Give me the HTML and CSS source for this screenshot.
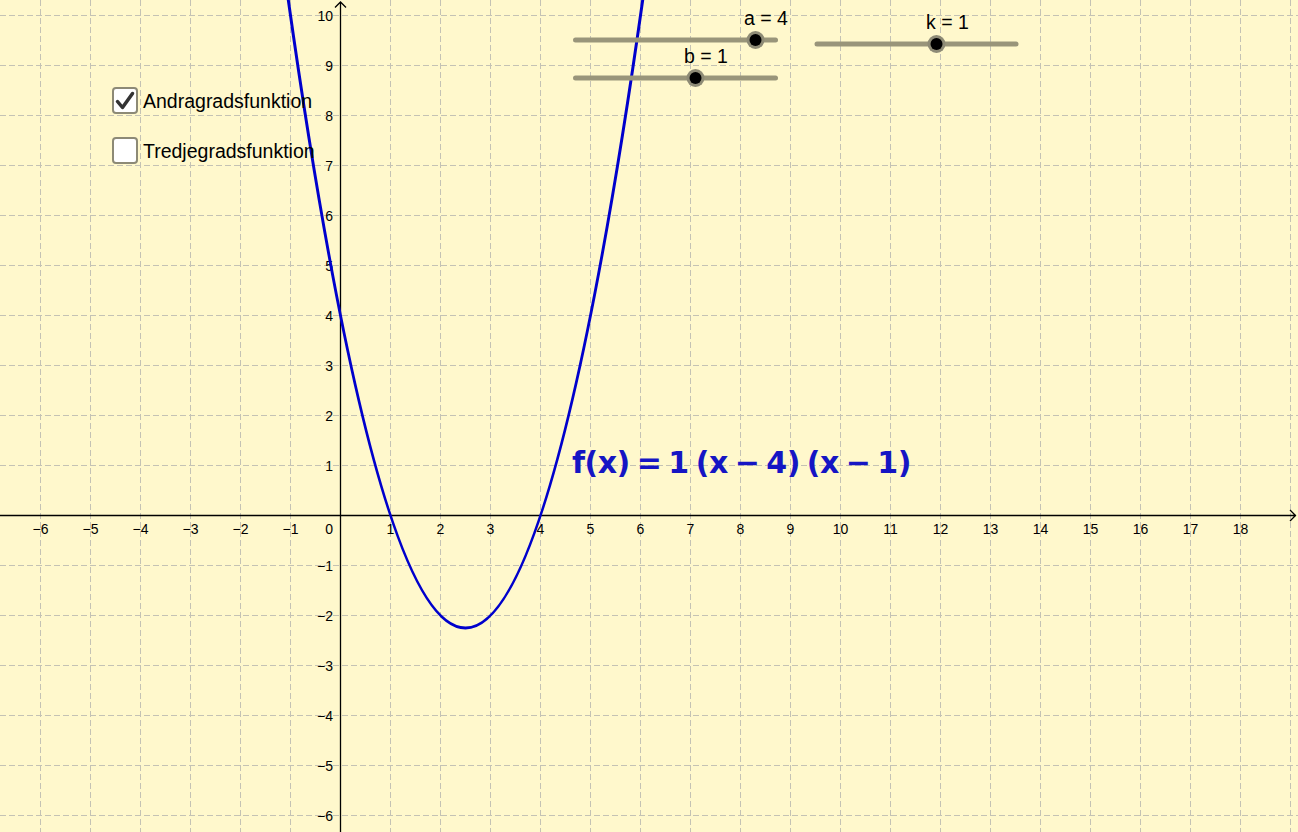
FILE: index.html
```html
<!DOCTYPE html>
<html>
<head>
<meta charset="utf-8">
<link rel="stylesheet" href="styles.css">
</head>
<body>
<div class="board">
  <svg class="plot" width="1298" height="832" viewBox="0 0 1298 832" xmlns="http://www.w3.org/2000/svg">
    <path class="grid" d="M40.5 0V832M90.5 0V832M140.5 0V832M190.5 0V832M240.5 0V832M290.5 0V832M390.5 0V832M440.5 0V832M490.5 0V832M540.5 0V832M590.5 0V832M640.5 0V832M690.5 0V832M740.5 0V832M790.5 0V832M840.5 0V832M890.5 0V832M940.5 0V832M990.5 0V832M1040.5 0V832M1090.5 0V832M1140.5 0V832M1190.5 0V832M1240.5 0V832M1290.5 0V832"/>
    <path class="grid" d="M0 15.5H1298M0 65.5H1298M0 115.5H1298M0 165.5H1298M0 215.5H1298M0 265.5H1298M0 315.5H1298M0 365.5H1298M0 415.5H1298M0 465.5H1298M0 565.5H1298M0 615.5H1298M0 665.5H1298M0 715.5H1298M0 765.5H1298M0 815.5H1298"/>
    <path class="axis" d="M0 515.5H1296M1290 510L1295.5 515.5L1290 521M340.5 832V2M335 7.5L340.5 2L346 7.5"/>
    <g class="xlab">
      <text x="40.5" y="534">−6</text><text x="90.5" y="534">−5</text><text x="140.5" y="534">−4</text>
      <text x="190.5" y="534">−3</text><text x="240.5" y="534">−2</text><text x="290.5" y="534">−1</text>
      <text x="390.5" y="534">1</text><text x="440.5" y="534">2</text><text x="490.5" y="534">3</text>
      <text x="540.5" y="534">4</text><text x="590.5" y="534">5</text><text x="640.5" y="534">6</text>
      <text x="690.5" y="534">7</text><text x="740.5" y="534">8</text><text x="790.5" y="534">9</text>
      <text x="840.5" y="534">10</text><text x="890.5" y="534">11</text><text x="940.5" y="534">12</text>
      <text x="990.5" y="534">13</text><text x="1040.5" y="534">14</text><text x="1090.5" y="534">15</text>
      <text x="1140.5" y="534">16</text><text x="1190.5" y="534">17</text><text x="1240.5" y="534">18</text>
    </g>
    <g class="ylab">
      <text x="333" y="20.5">10</text><text x="333" y="70.5">9</text><text x="333" y="120.5">8</text>
      <text x="333" y="170.5">7</text><text x="333" y="220.5">6</text><text x="333" y="270.5">5</text>
      <text x="333" y="320.5">4</text><text x="333" y="370.5">3</text><text x="333" y="420.5">2</text>
      <text x="333" y="470.5">1</text><text x="333" y="534">0</text>
      <text x="333" y="570.5">−1</text><text x="333" y="620.5">−2</text><text x="333" y="670.5">−3</text>
      <text x="333" y="720.5">−4</text><text x="333" y="770.5">−5</text><text x="333" y="820.5">−6</text>
    </g>
    <path class="curve" d="M285.5 -20Q465.5 1276 645.5 -20"/>
    <g class="slider">
      <line class="track" x1="575.5" y1="40" x2="775.5" y2="40"/>
      <circle class="halo" cx="755.5" cy="40" r="9"/>
      <circle class="knob" cx="755.5" cy="40" r="6"/>
      <text class="slabel" x="744" y="25">a = 4</text>
    </g>
    <g class="slider">
      <line class="track" x1="575.5" y1="78" x2="775.5" y2="78"/>
      <circle class="halo" cx="695.5" cy="78" r="9"/>
      <circle class="knob" cx="695.5" cy="78" r="6"/>
      <text class="slabel" x="684" y="62.5">b = 1</text>
    </g>
    <g class="slider">
      <line class="track" x1="817" y1="44" x2="1016" y2="44"/>
      <circle class="halo" cx="936.5" cy="44" r="9"/>
      <circle class="knob" cx="936.5" cy="44" r="6"/>
      <text class="slabel" x="926" y="29">k = 1</text>
    </g>
  </svg>

  <div class="checks">
    <label class="check">
      <span class="box">
        <svg width="22" height="22" viewBox="0 0 22 22"><path class="tick" d="M3.5 11.5L8.5 17.5L18.5 3.5"/></svg>
      </span>
      <span class="ctext">Andragradsfunktion</span>
    </label>
    <label class="check">
      <span class="box"></span>
      <span class="ctext">Tredjegradsfunktion</span>
    </label>
  </div>

  <div class="formula">f(x) = 1 (x − 4) (x − 1)</div>
</div>
</body>
</html>
```

FILE: styles.css
```css
html, body {
  margin: 0;
  padding: 0;
  background: #fff8cc;
  overflow: hidden;
}

.board {
  position: relative;
  width: 1298px;
  height: 832px;
  background: #fff8cc;
  font-family: "Liberation Sans", Arial, sans-serif;
}

.plot {
  position: absolute;
  left: 0;
  top: 0;
  display: block;
}

.grid {
  fill: none;
  stroke: #c4c2b4;
  stroke-width: 1;
  stroke-dasharray: 6 3;
}

.axis {
  fill: none;
  stroke: #000;
  stroke-width: 1.3;
}

.xlab text {
  font-family: "Liberation Sans", Arial, sans-serif;
  font-size: 14px;
  fill: #000;
  text-anchor: middle;
}

.ylab text {
  font-family: "Liberation Sans", Arial, sans-serif;
  font-size: 14px;
  fill: #000;
  text-anchor: end;
}

.curve {
  fill: none;
  stroke: #0000cc;
  stroke-width: 3;
}

.track {
  stroke: #99957a;
  stroke-width: 5;
  stroke-linecap: round;
}

.halo {
  fill: #8e8b76;
}

.knob {
  fill: #000;
}

.slabel {
  font-family: "Liberation Sans", Arial, sans-serif;
  font-size: 19.5px;
  fill: #000;
}

.checks {
  position: absolute;
  left: 112px;
  top: 87px;
  display: flex;
  flex-direction: column;
  gap: 23px;
}

.check {
  display: flex;
  align-items: center;
  gap: 5px;
  height: 27px;
}

.box {
  box-sizing: border-box;
  width: 26px;
  height: 27px;
  border: 2px solid #8d8a76;
  border-radius: 4px;
  background: #fff;
  display: flex;
  align-items: center;
  justify-content: center;
}

.box svg {
  display: block;
}

.tick {
  fill: none;
  stroke: #333;
  stroke-width: 3.5;
  stroke-linecap: round;
  stroke-linejoin: round;
}

.ctext {
  font-family: "Liberation Sans", Arial, sans-serif;
  font-size: 19.5px;
  color: #000;
  line-height: 27px;
  position: relative;
  top: 1px;
}

.formula {
  position: absolute;
  left: 572px;
  top: 443px;
  font-family: "DejaVu Sans", sans-serif;
  font-weight: bold;
  font-size: 30px;
  letter-spacing: -0.5px;
  word-spacing: -3px;
  color: #1515c4;
  white-space: nowrap;
  line-height: 40px;
}
```
